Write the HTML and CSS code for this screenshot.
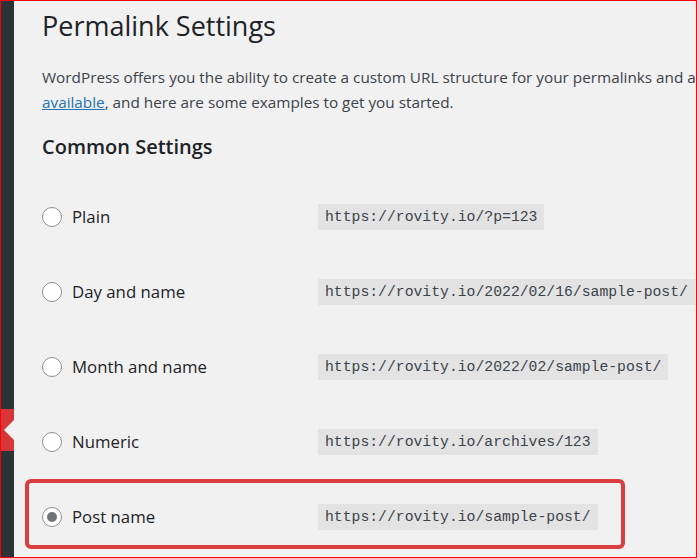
FILE: index.html
```html
<!DOCTYPE html>
<html lang="en">
<head>
<meta charset="utf-8">
<title>Permalink Settings</title>
<link rel="stylesheet" href="styles.css">
</head>
<body>
<div class="frame">
  <aside class="sidebar">
    <div class="menu-current"></div>
  </aside>
  <main class="content">
    <h1 class="title">Permalink Settings</h1>
    <p class="intro">WordPress offers you the ability to create a custom URL structure for your permalinks and archives. This can improve the aesthetics, usability, and forward-compatibility of your links. A number of tags are<br><a href="#" class="link">available</a>, and here are some examples to get you started.</p>
    <h2 class="subtitle">Common Settings</h2>
    <div class="options">
      <label class="row">
        <span class="choice"><input type="radio" name="p" class="radio"><span class="label">Plain</span></span>
        <code class="url">https://rovity.io/?p=123</code>
      </label>
      <label class="row">
        <span class="choice"><input type="radio" name="p" class="radio"><span class="label">Day and name</span></span>
        <code class="url">https://rovity.io/2022/02/16/sample-post/</code>
      </label>
      <label class="row">
        <span class="choice"><input type="radio" name="p" class="radio"><span class="label">Month and name</span></span>
        <code class="url">https://rovity.io/2022/02/sample-post/</code>
      </label>
      <label class="row">
        <span class="choice"><input type="radio" name="p" class="radio"><span class="label">Numeric</span></span>
        <code class="url">https://rovity.io/archives/123</code>
      </label>
      <label class="row row-highlight">
        <span class="choice"><input type="radio" name="p" class="radio" checked><span class="label">Post name</span></span>
        <code class="url">https://rovity.io/sample-post/</code>
      </label>
    </div>
  </main>
</div>
</body>
</html>
```

FILE: styles.css
```css
* { box-sizing: border-box; }
html, body { margin: 0; padding: 0; background: #f1f1f1; }
.frame {
  width: 697px;
  height: 558px;
  border: 1px solid #ff0000;
  display: flex;
  overflow: hidden;
  background: #f1f1f1;
}
.sidebar {
  width: 13px;
  flex-shrink: 0;
  background: #2c3338;
  display: flex;
  flex-direction: column;
}
.menu-current {
  position: relative;
  margin-top: 408px;
  height: 42px;
  background: #d63638;
}
.menu-current::after {
  content: "";
  position: absolute;
  right: 0;
  top: 11px;
  border-top: 10px solid transparent;
  border-bottom: 10px solid transparent;
  border-right: 10px solid #f1f1f1;
}
.content {
  flex: 1;
  min-width: 0;
  padding-left: 28px;
  overflow: hidden;
  font-family: "Open Sans", "Noto Sans", sans-serif;
  color: #3c434a;
}
.title {
  margin: 0;
  padding-top: 7px;
  font-size: 27px;
  line-height: 35px;
  font-weight: 400;
  color: #1d2327;
}
.intro {
  margin: 21.6px 0 0;
  font-size: 15.3px;
  line-height: 25px;
  white-space: nowrap;
  color: #3c434a;
}
.link { color: #2271b1; text-decoration: underline; }
.subtitle {
  margin: 18.6px 0 0;
  font-size: 20px;
  line-height: 28px;
  font-weight: 600;
  color: #1d2327;
}
.options {
  margin-top: 18.3px;
  display: flex;
  flex-direction: column;
}
.row {
  display: flex;
  align-items: center;
  height: 75px;
}
.choice {
  width: 276px;
  flex-shrink: 0;
  display: flex;
  align-items: center;
  gap: 10px;
}
.radio {
  -webkit-appearance: none;
  appearance: none;
  margin: 0;
  width: 20px;
  height: 20px;
  border-radius: 50%;
  border: 1px solid #8c8f94;
  background: #fff;
  display: flex;
  align-items: center;
  justify-content: center;
}
.radio:checked::before {
  content: "";
  width: 10px;
  height: 10px;
  border-radius: 50%;
  background: #6f7479;
}
.label {
  font-size: 16.8px;
  font-weight: 500;
  color: #1d2327;
}
.url {
  flex-shrink: 0;
  font-family: "Liberation Mono", monospace;
  font-size: 14.75px;
  line-height: 25px;
  padding: 1px 7px 0;
  background: #e3e3e3;
  color: #3c434a;
  white-space: nowrap;
}
.row-highlight {
  margin-left: -17px;
  width: 600px;
  height: 70px;
  padding-left: 13px;
  padding-top: 5px;
  border: 4px solid #db3e3e;
  border-radius: 6px;
}
```
